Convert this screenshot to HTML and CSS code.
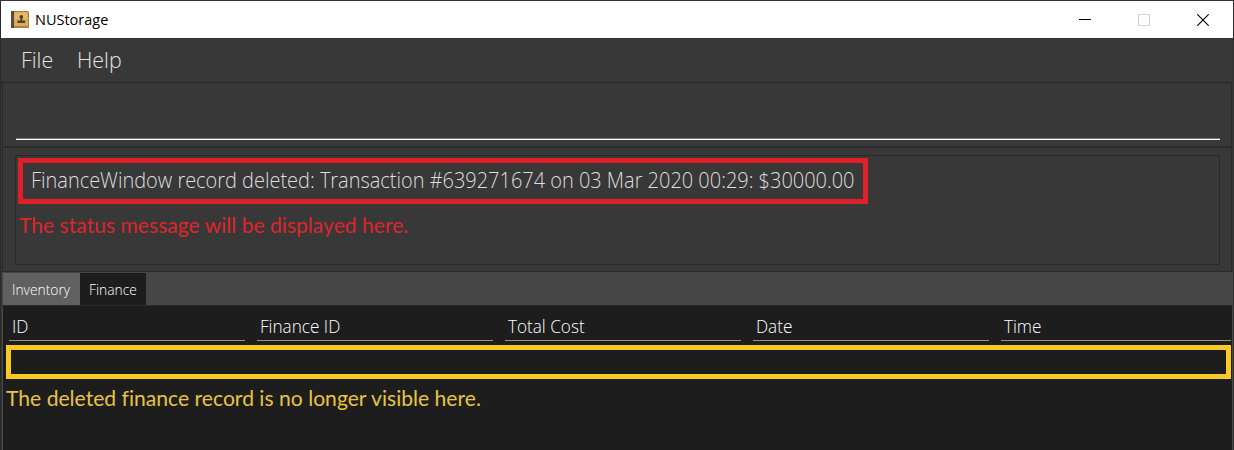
FILE: index.html
```html
<!DOCTYPE html>
<html lang="en">
<head>
<meta charset="utf-8">
<title>NUStorage</title>
<link rel="stylesheet" href="styles.css">
</head>
<body>
<div class="window">
  <header class="titlebar">
    <svg class="app-icon" width="18" height="17" viewBox="0 0 18 17">
      <rect width="18" height="17" rx="1" fill="#a9803f"/>
      <rect width="3" height="17" fill="#5c4b3b"/>
      <rect x="3" y="1" width="14" height="14" fill="#d9ab60"/>
      <rect x="4" y="2" width="12" height="6" fill="#e2b76e"/>
      <path d="M10.300 4c1.300 0 2 1 1.700 2.200-.2.900-.8 1.500-.9 2.600v.7h3v2.500H6.500V9.500h3v-.7c-.1-1.100-.7-1.700-.9-2.600C8.300 5 9 4 10.300 4z" fill="#59401d"/>
    </svg>
    <span class="app-name">NUStorage</span>
    <div class="controls">
      <svg width="12" height="13" viewBox="0 0 12 13"><path d="M0 6.500h12" stroke="#000"/></svg>
      <svg width="12" height="13" viewBox="0 0 12 13"><path d="M.5 1.500h11v11H.5z" fill="none" stroke="#ccc"/></svg>
      <svg width="12" height="13" viewBox="0 0 12 13"><path d="M.3 1.300l11.400 11.400M11.700 1.300L.3 12.700" stroke="#000" stroke-width="1.200"/></svg>
    </div>
  </header>
  <nav class="menubar"><span class="menu file">File</span><span class="menu help">Help</span></nav>
  <section class="command"><div class="command-line"></div></section>
  <section class="result">
    <div class="result-box">
      <div class="status"><span class="status-text">FinanceWindow record deleted: Transaction #639271674 on 03 Mar 2020 00:29: $30000.00</span></div>
      <div class="note note-red"><span>The status message will be displayed here.</span></div>
    </div>
  </section>
  <div class="tabs">
    <div class="tab tab-inventory"><span>Inventory</span></div>
    <div class="tab tab-finance"><span>Finance</span></div>
  </div>
  <main class="table">
    <div class="columns">
      <div class="column"><span>ID</span></div>
      <div class="column"><span>Finance ID</span></div>
      <div class="column"><span>Total Cost</span></div>
      <div class="column"><span>Date</span></div>
      <div class="column"><span>Time</span></div>
    </div>
    <div class="record"></div>
    <div class="note note-yellow"><span>The deleted finance record is no longer visible here.</span></div>
  </main>
</div>
</body>
</html>
```
FILE: styles.css
```css
* { box-sizing: border-box; }
body { margin: 0; background: #29282a; overflow: hidden; }
span { display: inline-block; white-space: nowrap; transform-origin: 0 50%; }
svg { display: block; }
.window {
  width: 1234px; height: 450px;
  border-top: 1px solid #3a3438; border-left: 1px solid #2b2a2b; border-right: 1px solid #303030;
  background: #383838; font-family: "Open Sans", sans-serif; font-weight: 300; color: #e4e4e4;
}
.titlebar { height: 37px; background: #fff; display: flex; align-items: center; padding: 0 24px 0 10px; }
.app-name { margin-left: 6px; font: 400 14.500px/20px "Open Sans", sans-serif; color: #000; }
.controls { margin-left: auto; display: flex; gap: 47px; }
.menubar { height: 45px; border-bottom: 1px solid #292929; display: flex; padding-left: 20px; font-size: 22.500px; line-height: 44px; }
.menu { transform: scaleX(.95); }
.file { width: 56px; }
.command { height: 65px; margin: 0 1px; border: solid #2c2c2c; border-width: 0 1px 2px; padding: 55px 11px 0 13px; }
.command-line { height: 2px; border-top: 1px solid #777; border-bottom: 1px solid #fff; }
.result { height: 124px; margin: 0 1px; border: solid #2a2a2a; border-width: 0 1px 1px; padding: 7px 11px 0 12px; }
.result-box { height: 110px; border: 1px solid #292929; padding: 2px; }
.status { width: 850px; height: 46px; border: 5px solid #df202b; padding-left: 8px; font-size: 22px; line-height: 32px; color: #dedede; }
.status-text { transform: scaleX(.907); }
.note { font-family: Lato, sans-serif; font-weight: 400; font-variant-ligatures: none; }
.note-red { font-size: 21.800px; line-height: 41px; color: #df252c; padding-left: 1px; }
.note-red span { transform: scaleX(.968); }
.tabs { height: 34px; background: #464646; border-bottom: 1px solid #2c2c2c; margin-left: 1px; display: flex; padding: 1px 0 0 1px; font-size: 15px; line-height: 33px; }
.tab { padding-left: 9px; color: #fff; }
.tab span { transform: scaleX(.92); }
.tab-inventory { width: 77px; background: #606060; }
.tab-finance { width: 66px; background: #1d1d1d; }
.table { height: 144px; margin-left: 1px; border-left: 1px solid #484848; border-right: 1px solid #484848; background: #1d1d1d; }
.columns { display: grid; grid-template-columns: 236px 236px 236px 236px 230px; gap: 12px; padding-left: 6px; height: 35px; }
.column { border-bottom: 1px solid #929292; font-size: 17.500px; line-height: 41px; padding-left: 3px; color: #fff; overflow: hidden; }
.column span { transform: scaleX(.98); }
.record { width: 1225px; height: 34px; margin: 4px 0 0 3px; border: 5px solid #fac827; }
.note-yellow { font-size: 21.800px; line-height: 37px; color: #e9c43d; padding-left: 3px; }
.note-yellow span { transform: scaleX(.969); }
```
